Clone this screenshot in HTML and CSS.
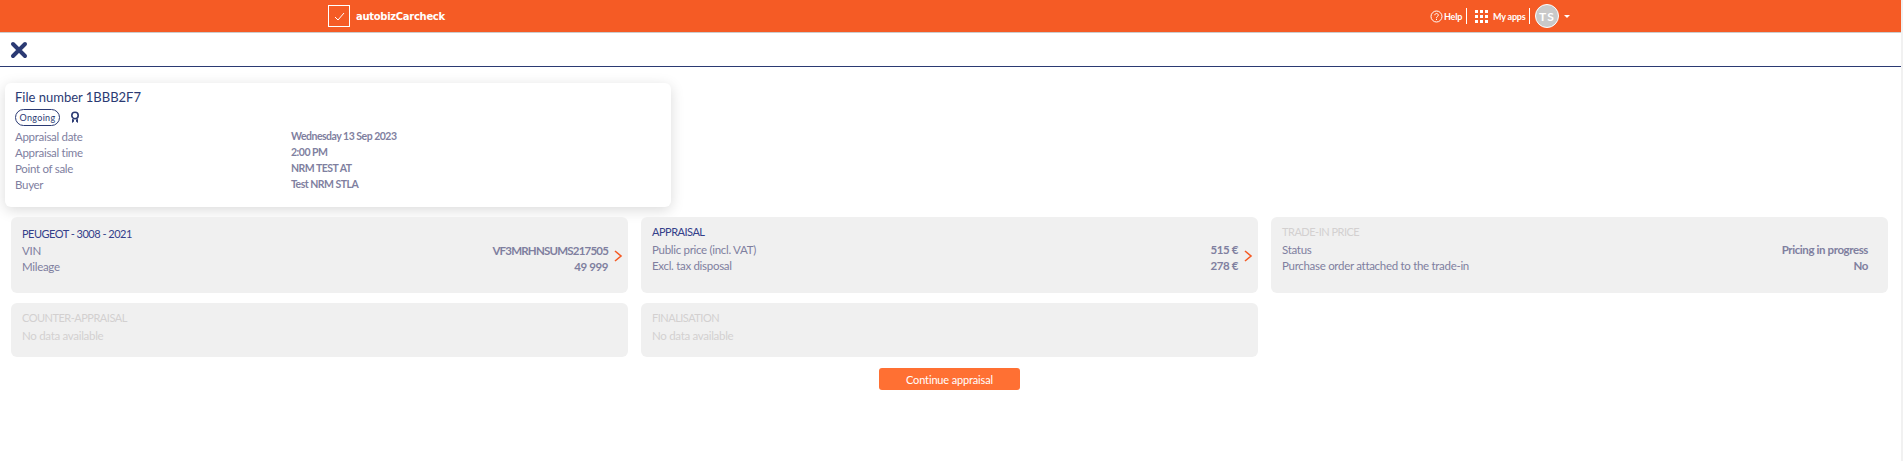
FILE: index.html
```html
<!DOCTYPE html>
<html>
<head>
<meta charset="utf-8"/>
<title>autobizCarcheck</title>
<link rel="stylesheet" href="styles.css">
</head>
<body>

<header class="topbar">
	<div class="brand">
		<span class="brand-box">
			<svg width="11" height="9" viewBox="0 0 11 9"><path d="M1 5l3 3 6-7" fill="none" stroke="#fff" stroke-width="1"/></svg>
		</span>
		<span class="brand-name">autobizCarcheck</span>
	</div>
	<nav class="topnav">
		<svg class="help-icon" width="13" height="13" viewBox="0 0 13 13"><circle cx="6.5" cy="6.5" r="5.5" fill="none" stroke="#fff" stroke-width="1"/><path d="M4.8 5.2c0-2.2 3.5-2.2 3.5 0 0 1.3-1.8 1.2-1.8 2.6" fill="none" stroke="#fff" stroke-width="1"/><rect x="6" y="8.8" width="1" height="1.2" fill="#fff"/></svg>
		<span class="nav-text help-text">Help</span>
		<span class="nav-sep sep-help"></span>
		<span class="apps-grid">
			<i></i><i></i><i></i><i></i><i></i><i></i><i></i><i></i><i></i>
		</span>
		<span class="nav-text apps-text">My apps</span>
		<span class="nav-sep sep-apps"></span>
		<span class="avatar">TS</span>
		<span class="caret"></span>
	</nav>
</header>

<div class="closebar">
	<svg width="18" height="18" viewBox="0 0 18 18"><path d="M3 3l12 12M15 3L3 15" fill="none" stroke="#2b3a73" stroke-width="4" stroke-linecap="round"/></svg>
</div>

<main class="content">
	<section class="file-card">
		<h1>File number 1BBB2F7</h1>
		<div class="status-row">
			<span class="pill">Ongoing</span>
			<svg width="10" height="13" viewBox="0 0 10 13"><circle cx="5" cy="4.5" r="3.200" fill="none" stroke="#2b3a73" stroke-width="1.600"/><path d="M2 8v4l2-1.500V8.600zM8 8v4l-2-1.500V8.600z" fill="#2b3a73"/></svg>
		</div>
		<dl class="file-info">
			<dt>Appraisal date</dt><dd>Wednesday 13 Sep 2023</dd>
			<dt>Appraisal time</dt><dd>2:00 PM</dd>
			<dt>Point of sale</dt><dd>NRM TEST AT</dd>
			<dt>Buyer</dt><dd>Test NRM STLA</dd>
		</dl>
	</section>

	<section class="panels">
		<div class="panel vehicle">
			<h2>PEUGEOT - 3008 - 2021</h2>
			<div class="line"><span>VIN</span><b class="vin">VF3MRHNSUMS217505</b></div>
			<div class="line"><span>Mileage</span><b>49 999</b></div>
			<svg class="chevron" width="9" height="12" viewBox="0 0 9 12"><path d="M1 1l6 5-6 5" fill="none" stroke="#f55b25" stroke-width="1.600"/></svg>
		</div>
		<div class="panel">
			<h2>APPRAISAL</h2>
			<div class="line"><span>Public price (incl. VAT)</span><b>515 €</b></div>
			<div class="line"><span>Excl. tax disposal</span><b>278 €</b></div>
			<svg class="chevron" width="9" height="12" viewBox="0 0 9 12"><path d="M1 1l6 5-6 5" fill="none" stroke="#f55b25" stroke-width="1.600"/></svg>
		</div>
		<div class="panel">
			<h2 class="off">TRADE-IN PRICE</h2>
			<div class="line"><span>Status</span><b>Pricing in progress</b></div>
			<div class="line"><span>Purchase order attached to the trade-in</span><b>No</b></div>
		</div>
		<div class="panel short">
			<h2 class="off">COUNTER-APPRAISAL</h2>
			<div class="line off"><span>No data available</span></div>
		</div>
		<div class="panel short">
			<h2 class="off">FINALISATION</h2>
			<div class="line off"><span>No data available</span></div>
		</div>
	</section>

	<div class="actions">
		<button class="btn-continue">Continue appraisal</button>
	</div>
</main>

</body>
</html>
```

FILE: styles.css
```css
html {
	margin: 0;
	padding: 0;
	background: #f1f1f1;
}
body {
	margin: 0 2px 0 0;
	padding: 0;
	background: #fff;
	font-family: Lato, sans-serif;
	font-size: 11.5px;
	letter-spacing: -.3px;
	color: #7f7f9f;
	overflow: hidden;
	height: 461px;
}
/* top bar */
.topbar {
	display: flex;
	align-items: center;
	height: 32px;
	background: #f55b25;
	border-bottom: 1px solid #ccc;
	padding-left: 328px;
	color: #fff;
}
.brand {
	display: flex;
	align-items: center;
	width: 1102px;
}
.brand-box {
	display: flex;
	align-items: center;
	justify-content: center;
	box-sizing: border-box;
	width: 22px;
	height: 22px;
	border: 1px solid #fff;
	margin-right: 6px;
}
.brand-name {
	font-family: "DejaVu Sans", sans-serif;
	font-weight: bold;
	font-size: 10px;
	letter-spacing: -.3px;
}
.topnav {
	display: flex;
	align-items: center;
	height: 32px;
}
.help-icon {
	margin-right: 1px;
}
.nav-text {
	font-size: 9px;
	font-weight: bold;
	letter-spacing: -.2px;
	white-space: nowrap;
}
.help-text {
	width: 18px;
}
.apps-text {
	width: 32px;
}
.nav-sep {
	width: 1px;
	height: 16px;
	background: #fff;
}
.sep-help {
	margin: 0 8px 0 4px;
}
.sep-apps {
	margin: 0 5px 0 4px;
}
.apps-grid {
	display: grid;
	grid-template-columns: repeat(3, 3px);
	gap: 2px;
	margin-right: 5px;
}
.apps-grid i {
	width: 3px;
	height: 3px;
	background: #fff;
}
.avatar {
	display: flex;
	align-items: center;
	justify-content: center;
	box-sizing: border-box;
	width: 24px;
	height: 24px;
	border-radius: 50%;
	background: #c9c9c9;
	border: 1px solid #fff;
	font-size: 12px;
	font-weight: bold;
	letter-spacing: 1px;
}
.caret {
	width: 0;
	height: 0;
	border-left: 3px solid transparent;
	border-right: 3px solid transparent;
	border-top: 3px solid #fff;
	margin-left: 5px;
}
/* close bar */
.closebar {
	height: 33px;
	border-bottom: 1px solid #2b3a73;
	padding-left: 10px;
	display: flex;
	align-items: center;
}
/* file card */
.content {
	padding: 16px 13px 0 11px;
}
.file-card {
	box-sizing: border-box;
	width: 666px;
	height: 124px;
	margin-left: -6px;
	padding: 5px 10px;
	background: #fff;
	border-radius: 6px;
	box-shadow: 0 3px 14px rgba(0, 0, 0, .15);
}
.file-card h1 {
	margin: 0;
	font-size: 13px;
	font-weight: normal;
	letter-spacing: 0;
	color: #2b3a73;
	line-height: 18px;
}
.status-row {
	display: flex;
	align-items: center;
	gap: 10px;
	height: 17px;
	margin-top: 3px;
}
.pill {
	box-sizing: border-box;
	width: 45px;
	height: 17px;
	line-height: 15px;
	text-align: center;
	border: 1px solid #2b3a73;
	border-radius: 9px;
	font-size: 9px;
	letter-spacing: .3px;
	color: #2b3a73;
}
.file-info {
	display: grid;
	grid-template-columns: 276px 1fr;
	grid-auto-rows: 16px;
	margin: 3px 0 0;
	line-height: 16px;
}
.file-info dd {
	margin: 0;
	font-size: 10.5px;
	font-weight: bold;
	letter-spacing: -.5px;
	line-height: 14px;
}
/* panels */
.panels {
	display: grid;
	grid-template-columns: repeat(3, 1fr);
	gap: 10px 13px;
	margin-top: 10px;
}
.panel {
	position: relative;
	box-sizing: border-box;
	height: 76px;
	padding: 7px 20px 0 11px;
	background: #f0f0f0;
	border-radius: 6px;
}
.panel.short {
	height: 54px;
}
.panel.vehicle {
	padding-top: 9px;
}
.panel h2 {
	margin: 0 0 2px;
	font-size: 11px;
	font-weight: normal;
	letter-spacing: -.5px;
	line-height: 16px;
	color: #34408a;
}
.panel.vehicle h2 {
	margin-bottom: 1px;
}
.panel .off, .panel h2.off {
	color: #d3d0d0;
}
.line {
	display: flex;
	justify-content: space-between;
	line-height: 16px;
}
.line b {
	font-weight: bold;
	letter-spacing: -.4px;
}
.line .vin {
	letter-spacing: -.8px;
}
.chevron {
	position: absolute;
	right: 5px;
	top: 33px;
}
/* button */
.actions {
	display: flex;
	justify-content: center;
	margin-top: 11px;
}
.btn-continue {
	width: 141px;
	height: 22px;
	border: 0;
	border-radius: 3px;
	background: #ff7033;
	color: #fff;
	font-family: inherit;
	font-size: 11px;
	letter-spacing: -.15px;
	padding: 0;
}
```
